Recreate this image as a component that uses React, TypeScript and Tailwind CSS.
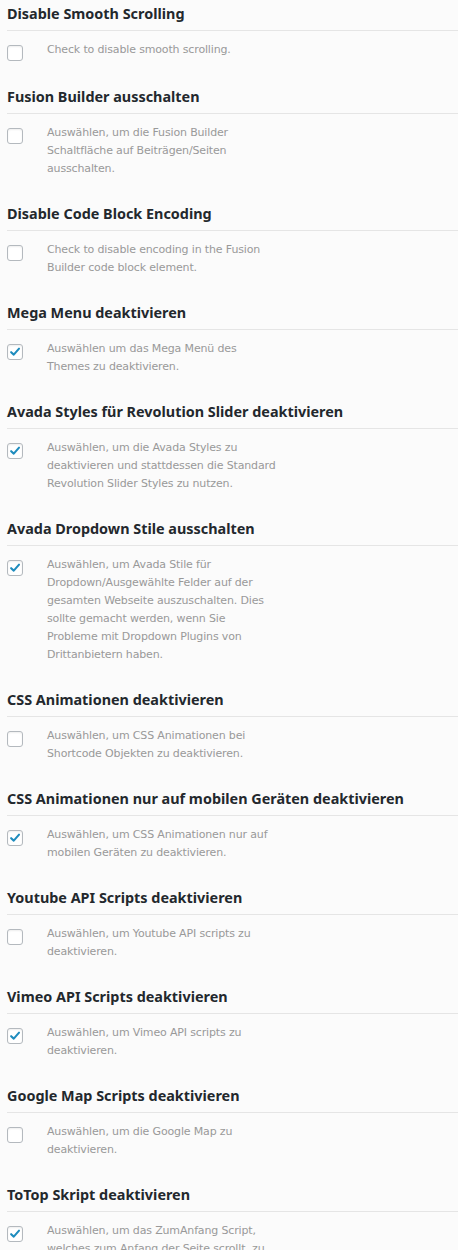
import React from "react";

type Option = {
  title: string;
  lines: string[];
  checked: boolean;
};

const options: Option[] = [
  {
    title: "Disable Smooth Scrolling",
    lines: ["Check to disable smooth scrolling."],
    checked: false,
  },
  {
    title: "Fusion Builder ausschalten",
    lines: [
      "Auswählen, um die Fusion Builder",
      "Schaltfläche auf Beiträgen/Seiten",
      "ausschalten.",
    ],
    checked: false,
  },
  {
    title: "Disable Code Block Encoding",
    lines: [
      "Check to disable encoding in the Fusion",
      "Builder code block element.",
    ],
    checked: false,
  },
  {
    title: "Mega Menu deaktivieren",
    lines: ["Auswählen um das Mega Menü des", "Themes zu deaktivieren."],
    checked: true,
  },
  {
    title: "Avada Styles für Revolution Slider deaktivieren",
    lines: [
      "Auswählen, um die Avada Styles zu",
      "deaktivieren und stattdessen die Standard",
      "Revolution Slider Styles zu nutzen.",
    ],
    checked: true,
  },
  {
    title: "Avada Dropdown Stile ausschalten",
    lines: [
      "Auswählen, um Avada Stile für",
      "Dropdown/Ausgewählte Felder auf der",
      "gesamten Webseite auszuschalten. Dies",
      "sollte gemacht werden, wenn Sie",
      "Probleme mit Dropdown Plugins von",
      "Drittanbietern haben.",
    ],
    checked: true,
  },
  {
    title: "CSS Animationen deaktivieren",
    lines: [
      "Auswählen, um CSS Animationen bei",
      "Shortcode Objekten zu deaktivieren.",
    ],
    checked: false,
  },
  {
    title: "CSS Animationen nur auf mobilen Geräten deaktivieren",
    lines: [
      "Auswählen, um CSS Animationen nur auf",
      "mobilen Geräten zu deaktivieren.",
    ],
    checked: true,
  },
  {
    title: "Youtube API Scripts deaktivieren",
    lines: ["Auswählen, um Youtube API scripts zu", "deaktivieren."],
    checked: false,
  },
  {
    title: "Vimeo API Scripts deaktivieren",
    lines: ["Auswählen, um Vimeo API scripts zu", "deaktivieren."],
    checked: true,
  },
  {
    title: "Google Map Scripts deaktivieren",
    lines: ["Auswählen, um die Google Map zu", "deaktivieren."],
    checked: false,
  },
  {
    title: "ToTop Skript deaktivieren",
    lines: [
      "Auswählen, um das ZumAnfang Script,",
      "welches zum Anfang der Seite scrollt, zu",
      "deaktivieren.",
    ],
    checked: true,
  },
];

function Checkbox({ checked }: { checked: boolean }) {
  return (
    <span className="mt-1 flex h-4 w-4 shrink-0 items-center justify-center rounded-[3px] border border-[#b4b9be] bg-white shadow-[inset_0_1px_2px_rgba(0,0,0,0.07)]">
      {checked && (
        <svg viewBox="0 0 16 16" className="h-4 w-4" aria-hidden>
          <path
            d="M3.6 8.2 6.6 11 12.6 4.2"
            fill="none"
            stroke="#1e8cbe"
            strokeWidth="2.4"
            strokeLinecap="round"
            strokeLinejoin="round"
          />
        </svg>
      )}
    </span>
  );
}

export default function App() {
  return (
    <div className="min-h-[1250px] w-[458px] overflow-hidden bg-[#fbfbfb] pl-[7px]">
      {options.map((opt) => (
        <section key={opt.title} className="pt-1 pb-[22px]">
          <h3 className="border-b border-[#e5e5e5] pb-[6px] font-['Noto_Sans',sans-serif] text-[14.4px] leading-5 font-bold whitespace-nowrap text-[#23282d]">
            {opt.title}
          </h3>
          <div className="flex items-start pt-[10px]">
            <Checkbox checked={opt.checked} />
            <p className="ml-6 font-['DejaVu_Sans',sans-serif] text-[11px] leading-[18px] tracking-[-0.15px] text-[#999]">
              {opt.lines.map((line, i) => (
                <span key={i} className="block whitespace-nowrap">
                  {line}
                </span>
              ))}
            </p>
          </div>
        </section>
      ))}
    </div>
  );
}
